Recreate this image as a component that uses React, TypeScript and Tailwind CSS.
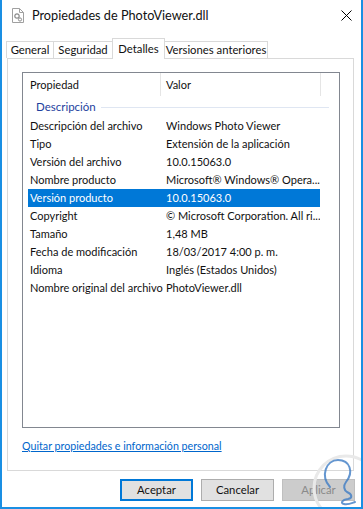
import React from "react";

const rows = [
  ["Descripción del archivo", "Windows Photo Viewer"],
  ["Tipo", "Extensión de la aplicación"],
  ["Versión del archivo", "10.0.15063.0"],
  ["Nombre producto", "Microsoft® Windows® Opera..."],
  ["Versión producto", "10.0.15063.0"],
  ["Copyright", "© Microsoft Corporation. All ri..."],
  ["Tamaño", "1,48 MB"],
  ["Fecha de modificación", "18/03/2017 4:00 p. m."],
  ["Idioma", "Inglés (Estados Unidos)"],
  ["Nombre original del archivo", "PhotoViewer.dll"],
];

const tabs = [
  { label: "General", w: "w-[48px]" },
  { label: "Seguridad", w: "w-[60px]" },
  { label: "Detalles", w: "w-[53px]", active: true },
  { label: "Versiones anteriores", w: "w-[104px]" },
];

function FileIcon() {
  return (
    <svg width="12" height="15" viewBox="0 0 12 15">
      <path d="M0.5 0.5h7l4 4v10h-11z" fill="#fff" stroke="#a0a0a0" />
      <path d="M7.5 0.5v4h4" fill="none" stroke="#a0a0a0" />
      <circle cx="5" cy="8" r="2.2" fill="none" stroke="#8c8c8c" strokeWidth="1.2" />
      <circle cx="8" cy="11.5" r="1.6" fill="none" stroke="#8c8c8c" strokeWidth="1" />
    </svg>
  );
}

function Watermark() {
  return (
    <svg
      className="absolute left-[306px] top-[450px]"
      width="70"
      height="70"
      viewBox="0 0 70 70"
    >
      <circle cx="38" cy="38" r="32" fill="none" stroke="#e9e9e9" strokeWidth="3" />
      <path
        d="M22 37 C12 26 18 10 30 10 C42 10 46 22 38 32 C35 36 36 40 39 42 C44 44 45 48 40 49 C34 50 32 53 36 54 C40 55 44 53 47 52"
        fill="none"
        stroke="#3d7cc4"
        strokeWidth="2"
        strokeLinecap="round"
        opacity="0.8"
      />
    </svg>
  );
}

export default function App() {
  return (
    <div
      className="relative w-[363px] h-[509px] bg-white border-x-2 border-b-2 border-[#1a8fe3] overflow-hidden text-[#111]"
      style={{ fontFamily: "Lato, 'Liberation Sans', sans-serif" }}
    >
      {/* title bar */}
      <div className="h-[30px] flex items-center pl-[10px] pr-[9px]">
        <FileIcon />
        <span className="ml-[8px] text-[12.7px] leading-none">
          Propiedades de PhotoViewer.dll
        </span>
        <svg className="ml-auto" width="11" height="11" viewBox="0 0 11 11">
          <path d="M0.5 0.5l10 10M10.5 0.5l-10 10" stroke="#000" strokeWidth="1" />
        </svg>
      </div>

      {/* tabs */}
      <div className="mt-[8px] pl-[5px] flex items-end h-[20px] text-[11.3px] whitespace-nowrap">
        {tabs.map((t) =>
          t.active ? (
            <div
              key={t.label}
              className={`${t.w} h-[21px] -mb-px -ml-px relative z-10 bg-white border border-b-0 border-[#d9d9d9] flex items-center justify-center`}
            >
              {t.label}
            </div>
          ) : (
            <div
              key={t.label}
              className={`${t.w} h-[17px] bg-white border border-b-0 border-[#d9d9d9] -ml-px flex items-center justify-center`}
            >
              {t.label}
            </div>
          )
        )}
      </div>

      {/* tab panel */}
      <div className="ml-[5px] w-[347px] h-[413px] border border-[#d9d9d9] px-[14px] pt-[13px] flex flex-col">
        <div className="w-[318px] h-[356px] border border-[#828790] text-[11px]">
          {/* header */}
          <div className="h-[24px] flex">
            <div className="w-[137px] pl-[7px] flex items-center">Propiedad</div>
            <div className="w-px h-[23px] bg-[#e5e5e5]" />
            <div className="w-[159px] pl-[5px] flex items-center">Valor</div>
            <div className="w-px h-[23px] bg-[#e5e5e5]" />
          </div>
          {/* group */}
          <div className="h-[20px] flex items-center pl-[13px] pr-[10px]">
            <span className="text-[#1e3f9e] text-[11.5px]">Descripción</span>
            <div className="flex-1 h-px bg-[#dfe6f2] ml-[5px]" />
          </div>
          {rows.map(([k, v], i) => {
            const sel = i === 4;
            return (
              <div
                key={k}
                className={`ml-[5px] w-[292px] h-[18px] flex items-center whitespace-nowrap ${
                  sel ? "bg-[#0078d7] text-white" : ""
                }`}
              >
                <div className="w-[138px] pl-[2px]">{k}</div>
                <div className="flex-1 overflow-hidden">{v}</div>
              </div>
            );
          })}
        </div>
        <div className="mt-[13px] text-[10.7px] text-[#0066cc] underline leading-none">
          Quitar propiedades e información personal
        </div>
      </div>

      {/* buttons */}
      <div className="mt-[8px] pl-[118px] flex gap-[8px] text-[11.3px]">
        <div className="w-[73px] h-[22px] bg-[#e1e1e1] border-2 border-[#0078d7] flex items-center justify-center">
          Aceptar
        </div>
        <div className="w-[73px] h-[22px] bg-[#e1e1e1] border border-[#adadad] flex items-center justify-center">
          Cancelar
        </div>
        <div className="w-[73px] h-[22px] bg-[#cccccc] border border-[#bfbfbf] text-[#8a8a8a] flex items-center justify-center">
          Aplicar
        </div>
      </div>

      <Watermark />
    </div>
  );
}
